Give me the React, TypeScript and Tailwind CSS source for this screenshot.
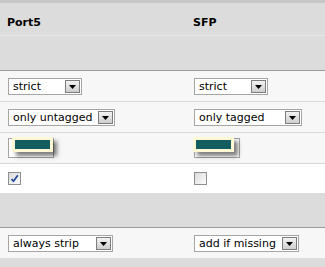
import React from 'react';

const font = { fontFamily: '"DejaVu Sans", Verdana, sans-serif' };

function Select({ value, width }: { value: string; width: string }) {
  return (
    <div className={`flex h-[17px] ${width} border border-[#a5a5a5] bg-white`}>
      <span className="flex-1 truncate pl-[4px] text-[11px] leading-[15px] text-black">{value}</span>
      <span className="m-[1px] flex w-[15px] items-end justify-center border border-[#7d7d7d] bg-gradient-to-b from-[#f2f2f2] to-[#cfcfcf] pb-[3px]">
        <svg width="7" height="4" viewBox="0 0 7 4">
          <path d="M0 0h7L3.5 4z" fill="#000" />
        </svg>
      </span>
    </div>
  );
}

function Swatch({ shift }: { shift: string }) {
  return (
    <div className="relative h-[20px] w-[46px] border border-[#a5a5a5] bg-white">
      <div className={`absolute top-[-2px] ${shift} bg-[#fff8d4] px-[3px] py-[3px] shadow-[4px_4px_4px_rgba(0,0,0,0.5)]`}>
        <div className="h-[9px] w-[35px] bg-[#135d61]" />
      </div>
    </div>
  );
}

function Check({ checked }: { checked?: boolean }) {
  return (
    <div className="flex h-[13px] w-[13px] items-center justify-center border border-[#8e8f8f] bg-gradient-to-br from-[#dcdcdc] to-[#fbfbfb]">
      {checked && (
        <svg width="9" height="9" viewBox="0 0 9 9">
          <path d="M1.5 5l2 2.2L7.8 1.2" stroke="#21449c" strokeWidth="1.7" fill="none" />
        </svg>
      )}
    </div>
  );
}

function Row({ bg, border, h, left, right }: { bg: string; border: string; h: string; left: React.ReactNode; right: React.ReactNode }) {
  return (
    <div className={`grid grid-cols-[186px_1fr] items-center px-2 ${h} ${bg} ${border}`}>
      <div>{left}</div>
      <div>{right}</div>
    </div>
  );
}

export default function App() {
  return (
    <div className="w-[325px] h-[267px] overflow-hidden bg-[#dcdcdc]" style={font}>
      <div className="h-[3px] bg-[#c6c6c6]" />
      <div className="grid h-[33px] grid-cols-[186px_1fr] border-b border-[#e8e8e8] px-[7px] pt-[13px] text-[11px] font-bold leading-[13px] text-black">
        <span>Port5</span>
        <span>SFP</span>
      </div>
      <div className="h-[35px] border-b border-[#9a9a9a]" />
      <Row
        h="h-[31px]"
        bg="bg-[#f7f7f7]"
        border="border-b border-[#d9d9d9]"
        left={<Select value="strict" width="w-[74px]" />}
        right={<Select value="strict" width="w-[74px]" />}
      />
      <Row
        h="h-[31px]"
        bg="bg-[#f7f7f7]"
        border="border-b border-[#d9d9d9]"
        left={<Select value="only untagged" width="w-[107px]" />}
        right={<Select value="only tagged" width="w-[108px]" />}
      />
      <Row
        h="h-[31px]"
        bg="bg-[#f7f7f7]"
        border="border-b border-[#d9d9d9]"
        left={<Swatch shift="left-[3px]" />}
        right={<Swatch shift="left-[-2px]" />}
      />
      <Row
        h="h-[29px]"
        bg="bg-white"
        border=""
        left={<Check checked />}
        right={<Check />}
      />
      <div className="h-[35px] border-b border-[#9a9a9a]" />
      <Row
        h="h-[30px]"
        bg="bg-[#f7f7f7]"
        border=""
        left={<Select value="always strip" width="w-[105px]" />}
        right={<Select value="add if missing" width="w-[105px]" />}
      />
    </div>
  );
}
